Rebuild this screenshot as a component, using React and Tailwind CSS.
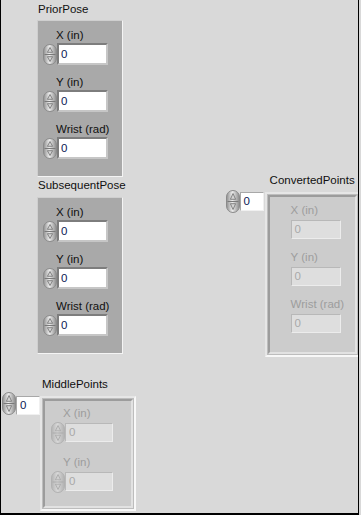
import React from "react";

const Spinner = ({ className = "", h = 21 }) => (
  <svg width="14" height={h} viewBox={`0 0 14 ${h}`} className={"block shrink-0 " + className}>
    <defs>
      <linearGradient id="spg" x1="0" y1="0" x2="1" y2="0">
        <stop offset="0" stopColor="#8f8f8f" />
        <stop offset="0.45" stopColor="#ececec" />
        <stop offset="1" stopColor="#8a8a8a" />
      </linearGradient>
    </defs>
    <rect x="0.5" y="0.5" width="13" height={h - 1} rx="6.5" fill="url(#spg)" stroke="#8a8a8a" />
    <line x1="1.5" y1={h / 2} x2="12.5" y2={h / 2} stroke="#7a7a7a" />
    <path d={`M7 3.5 L9.6 ${h / 2 - 2.2} H4.4 Z`} fill="#d4d4d4" stroke="#6e6e6e" strokeWidth="0.8" />
    <path d={`M4.4 ${h / 2 + 2.2} H9.6 L7 ${h - 3.5} Z`} fill="#d4d4d4" stroke="#6e6e6e" strokeWidth="0.8" />
  </svg>
);

const EnabledItem = ({ label }) => (
  <div className="flex flex-col">
    <div className="pl-[13px] h-[14px] leading-[14px] mb-[1px] text-[#101010]">{label}</div>
    <div className="flex items-start">
      <Spinner className="mt-[1px]" />
      <div className="w-[51px] h-[22px] bg-white border-2 border-t-[#7d7d7d] border-l-[#7d7d7d] border-r-[#c6c6c6] border-b-[#c6c6c6] pl-[2px] leading-[18px] text-[#0b1a55]">
        0
      </div>
    </div>
  </div>
);

const Cluster = () => (
  <div className="w-[86px] h-[157px] bg-[#a9a9a9] border border-t-[#cfcfcf] border-l-[#cfcfcf] border-r-[#f4f4f4] border-b-[#f4f4f4] pt-[7px] pl-[5px] flex flex-col gap-[10px]">
    <EnabledItem label="X (in)" />
    <EnabledItem label="Y (in)" />
    <EnabledItem label="Wrist (rad)" />
  </div>
);

const DisabledBox = ({ w }) => (
  <div
    className={
      "h-[19px] bg-[#dedede] border border-t-[#b8b8b8] border-l-[#b8b8b8] border-r-[#ececec] border-b-[#ececec] pl-[3px] leading-[17px] text-[#a9a9a9] " +
      w
    }
  >
    0
  </div>
);

const IndexControl = ({ spinMt }) => (
  <div className="flex items-start shrink-0">
    <Spinner h={23} className={spinMt} />
    <div className="mt-[5px] w-[24px] h-[19px] bg-white border border-t-[#a8a8a8] border-l-[#a8a8a8] border-r-[#f0f0f0] border-b-[#f0f0f0] pl-[3px] leading-[17px] text-[#0b1a55]">
      0
    </div>
  </div>
);

const Frame = ({ className, children }) => (
  <div className={"mt-[5px] border-2 border-t-[#e6e6e6] border-l-[#e6e6e6] border-r-[#f8f8f8] border-b-[#f8f8f8] bg-[#bdbdbd] p-[1px] flex " + className}>
    <div className="flex-1 border-2 border-t-[#9c9c9c] border-l-[#9c9c9c] border-r-[#e2e2e2] border-b-[#e2e2e2] bg-[#cccccc]">
      {children}
    </div>
  </div>
);

export default function App() {
  return (
    <div className="w-[361px] h-[515px] bg-[#d9d9d9]">
      <div className="w-[359px] h-[515px] border-l border-r border-b-2 border-black overflow-hidden flex flex-col text-[11.5px] font-['Liberation_Sans',Arial,sans-serif]">
        <div className="flex items-start">
          {/* left column */}
          <div className="ml-[36px] mt-[2px] flex flex-col">
            <div className="pl-[1px] h-[14px] leading-[14px] text-[#101010]">PriorPose</div>
            <div className="mt-[4px]">
              <Cluster />
            </div>
            <div className="mt-[1px] pl-[1px] h-[14px] leading-[14px] text-[#101010]">SubsequentPose</div>
            <div className="mt-[5px]">
              <Cluster />
            </div>
          </div>
          {/* ConvertedPoints */}
          <div className="ml-[100px] mt-[173px] flex flex-col">
            <div className="pl-[44px] h-[14px] leading-[14px] text-[#101010]">ConvertedPoints</div>
            <div className="flex items-start">
              <IndexControl spinMt="mt-[3px]" />
              <Frame className="ml-[1px] w-[95px] h-[165px]">
                <div className="pt-[6px] pl-[21px] flex flex-col gap-[11px]">
                  {["X (in)", "Y (in)", "Wrist (rad)"].map((l) => (
                    <div key={l} className="flex flex-col">
                      <div className="h-[14px] leading-[14px] mb-[3px] text-[#9d9d9d]">{l}</div>
                      <DisabledBox w="w-[50px]" />
                    </div>
                  ))}
                </div>
              </Frame>
            </div>
          </div>
        </div>
        {/* MiddlePoints */}
        <div className="mt-[20px] ml-[1px] flex flex-col">
          <div className="pl-[40px] h-[14px] leading-[14px] text-[#101010]">MiddlePoints</div>
          <div className="flex items-start">
            <IndexControl spinMt="mt-[1px]" />
            <Frame className="w-[96px] h-[115px]">
              <div className="pt-[5px] pl-[6px] flex flex-col gap-[11px]">
                {["X (in)", "Y (in)"].map((l) => (
                  <div key={l} className="flex flex-col">
                    <div className="pl-[12px] h-[14px] leading-[14px] mb-[2px] text-[#9d9d9d]">{l}</div>
                    <div className="flex items-start">
                      <Spinner h={22} className="opacity-40" />
                      <div className="mt-[1px]">
                        <DisabledBox w="w-[48px]" />
                      </div>
                    </div>
                  </div>
                ))}
              </div>
            </Frame>
          </div>
        </div>
      </div>
    </div>
  );
}
